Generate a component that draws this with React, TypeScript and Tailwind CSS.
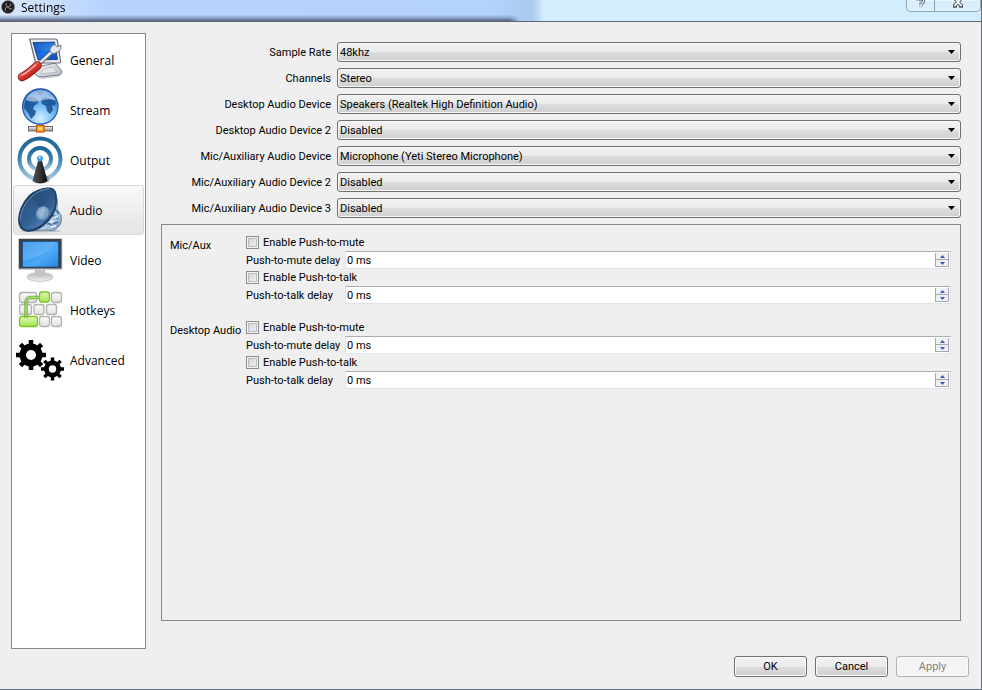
import { useState } from "react";
import type { ReactNode } from "react";

function Gear({ cx, cy, r, body, hole, tooth }: { cx: number; cy: number; r: number; body: number; hole: number; tooth: number }) {
  return (
    <g transform={`translate(${cx} ${cy})`}>
      {[0, 45, 90, 135].map((a) => (
        <rect key={a} x={-tooth / 2} y={-r} width={tooth} height={r * 2} transform={`rotate(${a})`} fill="#000" />
      ))}
      <circle r={body} fill="#000" />
      <circle r={hole} fill="#fff" />
    </g>
  );
}

function Key({ x, y, w, active }: { x: number; y: number; w: number; active?: boolean }) {
  return (
    <rect
      x={x}
      y={y}
      width={w}
      height="10"
      rx="2.5"
      fill={active ? "url(#keyGreen)" : "url(#keyGrey)"}
      stroke={active ? "#7bc623" : "#b2b2ae"}
      strokeWidth="1.3"
    />
  );
}

const ICONS: Record<string, ReactNode> = {
  General: (
    <>
      <defs>
        <linearGradient id="pcScreen" x1="0" y1="0" x2="1" y2="1">
          <stop offset="0" stopColor="#0b3fa8" />
          <stop offset="0.5" stopColor="#1873e0" />
          <stop offset="1" stopColor="#0a49b8" />
        </linearGradient>
        <linearGradient id="pcBase" x1="0" y1="0" x2="1" y2="1">
          <stop offset="0" stopColor="#f6f7fa" />
          <stop offset="1" stopColor="#b4b8c4" />
        </linearGradient>
        <linearGradient id="handle" x1="0" y1="0" x2="1" y2="1">
          <stop offset="0.2" stopColor="#f4867a" />
          <stop offset="0.5" stopColor="#d9382d" />
          <stop offset="1" stopColor="#9a130f" />
        </linearGradient>
      </defs>
      <path d="M21 33 L37 28 Q47 32 49 36 Q49 39 44 41 L30 43 Q24 43 21 38Z" fill="#8d909b" opacity=".35" />
      <path d="M28 30 L41 27 L47 34 Q49 37 45 39 L28 41 Q22 41 20 36Z" fill="url(#pcBase)" stroke="#7e8290" strokeWidth="1" />
      <path d="M29 33 L39 31 L43 36 L27 38Z" fill="#e4e6ec" stroke="#a7abb6" strokeWidth=".6" />
      <path d="M16 4 Q15 3 17 3 L41 3 Q43 3 43.500 5 L46.500 25 Q47 27 45 27 L24 27 Q22 27 21 25Z" fill="#e9ebf1" stroke="#666b7b" strokeWidth="1.2" />
      <path d="M19 6.500 L40.500 6 L43.500 23.500 L24 24Z" fill="url(#pcScreen)" stroke="#12306f" strokeWidth=".7" />
      <path d="M20 7.500 L40 7 L41.500 15 Q31 16 22 13Z" fill="#58a7f4" opacity=".25" />
      <path d="M25 28 L38 16" stroke="#6f7480" strokeWidth="4" />
      <path d="M25 27.500 L38 15.500" stroke="#eff1f5" strokeWidth="2.200" />
      <path d="M36 14.500 Q36 10 41 8.500 L43 11 L47 9 Q48 13 44 16 Q40 18 38 17.500Z" fill="#e5e8ee" stroke="#747986" strokeWidth="1" />
      <path d="M8 41 Q13 39 23.500 29.500" stroke="#7f120f" strokeWidth="8.500" strokeLinecap="round" fill="none" />
      <path d="M8 41 Q13 39 23.500 29.500" stroke="url(#handle)" strokeWidth="7" strokeLinecap="round" fill="none" />
      <path d="M8 39 Q13 37 21.500 29" stroke="#fbb3aa" strokeWidth="1.400" strokeLinecap="round" fill="none" />
    </>
  ),
  Stream: (
    <>
      <defs>
        <radialGradient id="globe" cx=".5" cy=".85" r=".85">
          <stop offset="0" stopColor="#d2f1ff" />
          <stop offset=".45" stopColor="#74bdf4" />
          <stop offset="1" stopColor="#2365c4" />
        </radialGradient>
        <linearGradient id="pipe" x1="0" y1="0" x2="0" y2="1">
          <stop offset="0" stopColor="#fafafa" />
          <stop offset="1" stopColor="#8a8a8a" />
        </linearGradient>
      </defs>
      <rect x="24.500" y="35" width="4" height="6" fill="url(#pipe)" stroke="#666" strokeWidth=".6" />
      <rect x="14.500" y="40.500" width="24" height="4.500" fill="url(#pipe)" stroke="#6c6c6c" strokeWidth="1" />
      <rect x="22.500" y="39.500" width="7.500" height="6.500" fill="#ffad26" stroke="#d5520c" strokeWidth="1.200" />
      <rect x="24.500" y="41" width="3.500" height="3" fill="#ffe57c" />
      <circle cx="26.300" cy="20.500" r="17.700" fill="url(#globe)" stroke="#2557a8" strokeWidth="1.200" />
      <path d="M11 16 Q13 10 18 11 L25 14 L23 18 L20 20 L19 23 L22 25 L21 29 L17 33 L14 27 L10 22Z" fill="#174d91" opacity=".85" />
      <path d="M27 13 L30 11 L35 12 L41 15 L42 18 L40 20 L38 19 L39 24 L36 28 L33 25 L32 20 L28 18Z" fill="#174d91" opacity=".85" />
      <path d="M22 5 L28 4.500 L30 7 L26 9Z M33 7 L37 8 L39 11 L34 10Z" fill="#174d91" opacity=".6" />
      <path d="M12 14 Q16 4 26.500 4 Q37 4 41 14 Q34 12 26 15 Q18 17 12 14Z" fill="#fff" opacity=".5" />
    </>
  ),
  Output: (
    <>
      <defs>
        <linearGradient id="wave" x1="0" y1="0" x2="0" y2="1">
          <stop offset="0" stopColor="#1e6596" />
          <stop offset=".5" stopColor="#3f81ae" />
          <stop offset="1" stopColor="#a7cce4" />
        </linearGradient>
        <linearGradient id="mast" x1="0" y1="0" x2="1" y2="0">
          <stop offset="0" stopColor="#555" />
          <stop offset=".5" stopColor="#333" />
          <stop offset="1" stopColor="#080808" />
        </linearGradient>
      </defs>
      <circle cx="26" cy="23" r="20.500" fill="none" stroke="url(#wave)" strokeWidth="4" />
      <circle cx="26" cy="23" r="11" fill="none" stroke="url(#wave)" strokeWidth="4" />
      <path d="M31 38 Q37 42 35 46 L30 47Z" fill="#555" opacity=".4" />
      <path d="M24 25 L28 25 L33.500 45 Q30 47.500 26 47.500 Q22 47.500 18.500 45Z" fill="url(#mast)" />
      <circle cx="26" cy="22.500" r="3" fill="#35a3ee" />
      <circle cx="25.500" cy="21.500" r="1.300" fill="#a3dcff" />
    </>
  ),
  Audio: (
    <>
      <defs>
        <linearGradient id="cone" x1="0" y1="0" x2="1" y2="1">
          <stop offset="0" stopColor="#2c4e78" />
          <stop offset=".5" stopColor="#315f94" />
          <stop offset="1" stopColor="#6796c4" />
        </linearGradient>
        <linearGradient id="magnet" x1="0" y1="0" x2="1" y2="1">
          <stop offset="0" stopColor="#4d7cac" />
          <stop offset=".7" stopColor="#b7d0e8" />
          <stop offset="1" stopColor="#6688ad" />
        </linearGradient>
      </defs>
      <ellipse cx="27" cy="45" rx="20" ry="1.500" fill="#666" opacity=".3" />
      <path d="M41 5 Q45 15 43 23 L47 29 Q49 38 43 42 Q39 46 32 44 L13 45Z" fill="url(#magnet)" stroke="#456c97" strokeWidth=".7" />
      <path d="M41 24 Q44 25 44 28 M37 30 Q42 29 44 33 M33 38 Q37 37 38 41 M39 38 L44 36" fill="none" stroke="#426f9f" strokeWidth="1.500" />
      <path d="M40 31 L44 31 M36 36 L40 35 M36 41 L42 40" stroke="#edf7ff" strokeWidth="1.300" />
      <path d="M35 1.500 Q41 1 42.500 8 Q45 24 35 35 Q24 47 12 45.500 Q4 44 4 33 Q5 20 15 9 Q25 1 35 1.500Z" fill="#1e4068" />
      <path d="M35 3 Q40 3 41 9 Q43 23 33 33.500 Q22 45 12 43.500 Q6 42 6 33 Q7 21 17 11 Q26 3 35 3Z" fill="url(#cone)" />
      <path d="M35 3 Q40 3 41 9 Q42 17 38 24 L34 22 L25 21 L17 11 Q26 3 35 3Z" fill="#17365b" opacity=".25" />
      <ellipse cx="28.500" cy="27" rx="6" ry="7" fill="#7da2c7" transform="rotate(35 28.500 27)" />
      <path d="M24 28 Q25 22 31 22 Q32 27 27 32Z" fill="#b5cadd" opacity=".5" />
      <path d="M6 34 Q7 21 17 11 Q26 3 35 3" fill="none" stroke="#7599bd" strokeWidth=".9" />
    </>
  ),
  Video: (
    <>
      <defs>
        <linearGradient id="tv" x1="0" y1="0" x2="1" y2="1">
          <stop offset="0" stopColor="#2380df" />
          <stop offset=".6" stopColor="#4baaf8" />
          <stop offset="1" stopColor="#2b82dc" />
        </linearGradient>
        <linearGradient id="stand" x1="0" y1="0" x2="0" y2="1">
          <stop offset="0" stopColor="#b7b7b7" />
          <stop offset="1" stopColor="#f0f0f0" />
        </linearGradient>
      </defs>
      <ellipse cx="26" cy="41" rx="13" ry="4.500" fill="url(#stand)" stroke="#c0c0c0" strokeWidth=".8" />
      <path d="M21 33 L31 33 L31 39 Q26 42 21 39Z" fill="#c4c4c4" />
      <rect x="4" y="2" width="44.500" height="32" rx="1" fill="#c9cdd0" />
      <rect x="5" y="3" width="42.500" height="29.500" fill="#3b4148" />
      <rect x="8.500" y="5.500" width="36" height="25.500" fill="url(#tv)" stroke="#15487e" strokeWidth=".6" />
      <path d="M9 6 L43 6 Q35 18 9 25Z" fill="#8acbff" opacity=".4" />
    </>
  ),
  Hotkeys: (
    <>
      <defs>
        <linearGradient id="keyGrey" x1="0" y1="0" x2="0" y2="1">
          <stop offset="0" stopColor="#fafafa" />
          <stop offset="1" stopColor="#e1e1df" />
        </linearGradient>
        <linearGradient id="keyGreen" x1="0" y1="0" x2="0" y2="1">
          <stop offset="0" stopColor="#e0f9ba" />
          <stop offset="1" stopColor="#a4e34d" />
        </linearGradient>
      </defs>
      <Key x={5.5} y={6.5} w={17} />
      <Key x={25.5} y={6} w={10} active />
      <Key x={37.5} y={6.5} w={10} />
      <Key x={5.5} y={18.5} w={12} />
      <Key x={20} y={18.5} w={10} />
      <Key x={32.5} y={18.5} w={10} />
      <Key x={5.5} y={30.5} w={18} active />
      <Key x={25.5} y={30.5} w={10} />
      <Key x={37.5} y={30.5} w={10} />
      <path d="M12 32 V17 Q12 11.500 17 11.500 H26" fill="none" stroke="#62a51e" strokeWidth="3.600" opacity=".75" />
      <path d="M12 32 V17 Q12 11.500 17 11.500 H26" fill="none" stroke="#a6d774" strokeWidth="1.400" />
    </>
  ),
  Advanced: (
    <>
      <Gear cx={17} cy={19} r={15} body={11.5} hole={5} tooth={4.5} />
      <Gear cx={38.5} cy={33} r={11.5} body={8.5} hole={3.7} tooth={3.5} />
    </>
  ),
};

const DEVICES = [
  { id: "rate", label: "Sample Rate", value: "48khz" },
  { id: "channels", label: "Channels", value: "Stereo" },
  { id: "desktop1", label: "Desktop Audio Device", value: "Speakers (Realtek High Definition Audio)" },
  { id: "desktop2", label: "Desktop Audio Device 2", value: "Disabled" },
  { id: "mic1", label: "Mic/Auxiliary Audio Device", value: "Microphone (Yeti Stereo Microphone)" },
  { id: "mic2", label: "Mic/Auxiliary Audio Device 2", value: "Disabled" },
  { id: "mic3", label: "Mic/Auxiliary Audio Device 3", value: "Disabled" },
];

const BUTTON =
  "h-[21px] w-[73px] rounded-[3px] border border-[#707070] bg-[linear-gradient(to_bottom,#f2f2f2_0%,#ebebeb_50%,#dddddd_50%,#cfcfcf_100%)] pt-px text-center leading-4 shadow-[inset_0_0_0_1px_#fafafa] disabled:border-[#adb2b5] disabled:bg-none disabled:bg-[#f4f4f4] disabled:text-[#838383]";

function TitleBar() {
  return (
    <header className="flex h-[22px] items-start justify-between border-b border-[#5f6874] bg-[linear-gradient(to_right,#d9e7fb_0px,#b7d3fd_110px,#b5d1fd_490px,#a9c9ee_532px,#d2edfd_544px,#d2edfd_100%)]">
      <div className="flex h-[21px] w-[520px] items-start bg-linear-to-b from-transparent from-70% via-[#6e86aa]/60 via-85% to-[#3d4660]/80 mask-r-from-98% pl-px">
        <svg className="size-3.5" viewBox="0 0 14 14" aria-hidden="true">
          <circle cx="7" cy="7" r="6.500" fill="#201f21" stroke="#777" strokeWidth=".5" />
          <path d="M5.500 3 Q3.500 6 7 7 Q10.500 6.500 9.500 3.500 M7 7 Q3.500 7 4.500 10.500 M7 7 Q9 10.500 11 8.500" fill="none" stroke="#8d8d8d" strokeWidth="1" />
        </svg>
        <h1 className="ml-1.5 font-['Open_Sans'] text-[12px] leading-[15px]">Settings</h1>
      </div>
      <div className="flex h-3 w-[75px] overflow-hidden rounded-b-[5px] border border-t-0 border-[#8ba2b0] bg-[#d8effb] shadow-[inset_0_0_0_1px_#e8f7fe]">
        <button type="button" aria-label="Help" className="flex w-7 justify-center border-r border-[#8ba2b0]">
          <svg width="10" height="9" viewBox="0 0 10 9" aria-hidden="true">
            <path d="M2 1 Q2.500 -1 5 -1 Q8 -1 7.500 1.500 Q7 3 5 4 V5 M5 6 V7" fill="none" stroke="#4e5969" strokeWidth="3" />
            <path d="M2 1 Q2.500 -1 5 -1 Q8 -1 7.500 1.500 Q7 3 5 4 V5 M5 6 V7" fill="none" stroke="#fff" strokeWidth="1.300" />
          </svg>
        </button>
        <button type="button" aria-label="Close" className="flex flex-1 justify-center">
          <svg width="12" height="9" viewBox="0 0 12 9" aria-hidden="true">
            <path d="M2.500 -2 L9.500 6 M9.500 -2 L2.500 6 M1 6 H5 M7 6 H11" stroke="#4e5969" strokeWidth="3.500" />
            <path d="M2.500 -2 L9.500 6 M9.500 -2 L2.500 6" stroke="#fff" strokeWidth="1.800" />
          </svg>
        </button>
      </div>
    </header>
  );
}

function DeviceSelect({ id, label, value }: { id: string; label: string; value: string }) {
  return (
    <>
      <label htmlFor={id} className="h-5 pt-px text-right leading-5">{label}</label>
      <div className="relative">
        <select
          id={id}
          className="block h-5 w-full appearance-none rounded-[3px] border border-[#707070] bg-[linear-gradient(to_bottom,#f2f2f2_0%,#ebebeb_50%,#dddddd_50%,#cfcfcf_100%)] pl-0.5 pt-0.5 leading-4 shadow-[inset_0_0_0_1px_#f7f7f7]"
        >
          <option>{value}</option>
        </select>
        <svg className="pointer-events-none absolute right-1.5 top-2 h-1 w-[7px]" viewBox="0 0 7 4" aria-hidden="true">
          <path d="M0 0 H7 L3.500 4Z" fill="#000" />
        </svg>
      </div>
    </>
  );
}

function DelayField({ id, label }: { id: string; label: string }) {
  const [delay, setDelay] = useState(0);
  return (
    <div className="flex h-[18px] items-stretch">
      <label htmlFor={id} className="w-[99px] shrink-0 whitespace-nowrap pt-px leading-[18px]">{label}</label>
      <div className="flex min-w-0 flex-1 border border-[#e2e3ea] border-t-[#abadb3] bg-white p-px">
        <input id={id} type="text" readOnly value={`${delay} ms`} className="min-w-0 flex-1 pt-px leading-4 outline-none" />
        <div className="flex w-3.5 flex-col border border-t-0 border-[#a6a9b0] bg-[#f0f0f0]">
          <button type="button" aria-label={`Increase ${label}`} onClick={() => setDelay(delay + 1)} className="flex flex-1 items-center justify-center border-b border-[#a6a9b0]">
            <svg width="5" height="3" viewBox="0 0 5 3" aria-hidden="true"><path d="M0 3 L2.500 0 L5 3Z" fill="#3d57b5" /></svg>
          </button>
          <button type="button" aria-label={`Decrease ${label}`} onClick={() => setDelay(Math.max(0, delay - 1))} className="flex flex-1 items-center justify-center">
            <svg width="5" height="3" viewBox="0 0 5 3" aria-hidden="true"><path d="M0 0 H5 L2.500 3Z" fill="#3d57b5" /></svg>
          </button>
        </div>
      </div>
    </div>
  );
}

function PushCheckbox({ label }: { label: string }) {
  return (
    <label className="flex h-[17px] items-center gap-1">
      <input
        type="checkbox"
        className="size-[13px] appearance-none border border-[#8e8f8f] bg-linear-to-br from-[#cbcfd5] to-[#f6f6f6] shadow-[inset_0_0_0_1px_#f4f4f4,inset_0_0_0_2px_#b9bec5] checked:bg-[#3d57b5]"
      />
      <span className="pt-px">{label}</span>
    </label>
  );
}

function SourceHotkeys({ id, name }: { id: string; name: string }) {
  return (
    <fieldset className="flex">
      <legend className="float-left w-[76px] shrink-0 pt-1 leading-4">{name}</legend>
      <div className="min-w-0 flex-1">
        <PushCheckbox label="Enable Push-to-mute" />
        <DelayField id={`${id}-mute`} label="Push-to-mute delay" />
        <PushCheckbox label="Enable Push-to-talk" />
        <DelayField id={`${id}-talk`} label="Push-to-talk delay" />
      </div>
    </fieldset>
  );
}

export default function App() {
  const [page, setPage] = useState("Audio");
  return (
    <div className="flex min-h-screen flex-col border-b border-r border-[#656d78] bg-[#efefef] font-['Roboto',sans-serif] text-[11px] text-black">
      <TitleBar />
      <main className="flex flex-1 gap-[15px] pl-[11px] pr-5 pt-[11px]">
        <nav className="w-[135px] shrink-0 border border-[#828790] bg-white p-px">
          {Object.keys(ICONS).map((name) => (
            <button
              key={name}
              type="button"
              aria-current={page === name ? "page" : undefined}
              onClick={() => setPage(name)}
              className="flex h-[50px] w-full items-center gap-1 rounded-[3px] border border-transparent text-left font-['Open_Sans'] text-[12px] aria-[current=page]:border-[#d9d9d9] aria-[current=page]:bg-linear-to-b aria-[current=page]:from-[#f8f8f8] aria-[current=page]:to-[#e5e5e5]"
            >
              <svg className="h-12 w-[52px] shrink-0" viewBox="0 0 52 48" aria-hidden="true">{ICONS[name]}</svg>
              <span className="pt-0.5">{name}</span>
            </button>
          ))}
        </nav>
        <section className="flex min-w-0 flex-1 flex-col pb-7 pt-[9px]">
          <div className="grid grid-cols-[170px_minmax(0,1fr)] gap-x-1.5 gap-y-1.5">
            {DEVICES.map((device) => (
              <DeviceSelect key={device.id} {...device} />
            ))}
          </div>
          <div className="mt-1.5 flex flex-1 flex-col gap-[15px] border border-[#828790] px-2 pr-[9px] pt-[9px]">
            <SourceHotkeys id="mic" name="Mic/Aux" />
            <SourceHotkeys id="desktop" name="Desktop Audio" />
          </div>
        </section>
      </main>
      <footer className="flex justify-end gap-2 pb-3 pr-3 pt-[7px]">
        <button type="button" className={BUTTON}>OK</button>
        <button type="button" className={BUTTON}>Cancel</button>
        <button type="button" className={BUTTON} disabled>Apply</button>
      </footer>
    </div>
  );
}
